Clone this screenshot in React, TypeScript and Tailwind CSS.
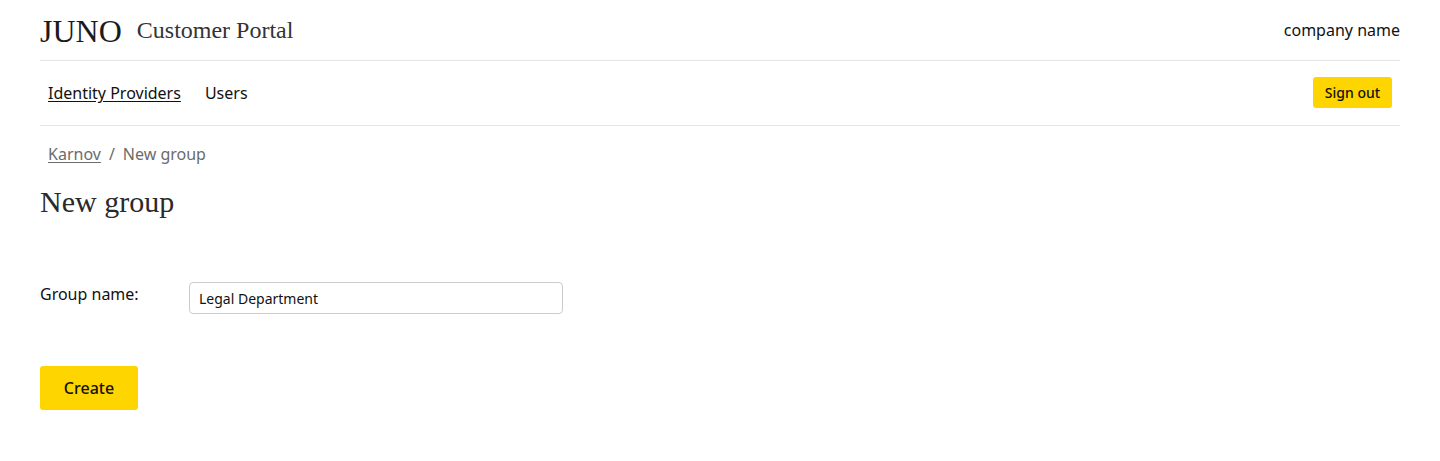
import React from "react";

export default function App() {
  const sans = { fontFamily: '"Noto Sans", sans-serif' } as React.CSSProperties;
  return (
    <div className="min-h-[461px] bg-white text-[#1a1a1a] font-['Noto_Sans',sans-serif]">
      <div className="mx-10">
        <header className="h-[61px] flex items-center justify-between border-b border-[#e6e6e6]">
          <div className="flex items-center gap-[15px] font-['Liberation_Serif',serif]">
            <span className="text-[32px] leading-none text-[#1a1a1a] mt-[1px]">JUNO</span>
            <span className="text-[24px] leading-none text-[#333]">Customer Portal</span>
          </div>
          <div className="text-[16px] text-[#111]">company name</div>
        </header>
        <nav className="h-[65px] flex items-center justify-between border-b border-[#e6e6e6]">
          <div className="flex items-center gap-2 text-[16px]">
            <a className="px-2 underline underline-offset-[2px] text-[#111]" href="#">Identity Providers</a>
            <a className="px-2 text-[#111]" href="#">Users</a>
          </div>
          <button className="mr-2 mb-[1px] h-[31px] w-[79px] rounded-[3px] bg-[#ffd500] text-[14px] font-medium text-[#111]">
            Sign out
          </button>
        </nav>
        <div className="pt-[16px] px-2 text-[16px] leading-6 text-[#6b6b6b] flex gap-2">
          <a className="underline underline-offset-[2px]" href="#">Karnov</a>
          <span>/</span>
          <span>New group</span>
        </div>
        <h1 className="mt-[18px] text-[30px] leading-9 font-['Liberation_Serif',serif] text-[#2a2a2a]">New group</h1>
        <div className="mt-[62px] flex items-start">
          <label className="w-[149px] text-[16px] leading-6 text-[#111]">Group name:</label>
          <input
            className="w-[374px] h-[32px] border border-[#cccccc] rounded-[4px] px-[9px] text-[14px] text-[#111] outline-none"
            defaultValue="Legal Department"
            style={sans}
          />
        </div>
        <button className="mt-[52px] w-[98px] h-[44px] rounded-[3px] bg-[#ffd500] text-[16px] font-medium text-[#111]">
          Create
        </button>
      </div>
    </div>
  );
}
